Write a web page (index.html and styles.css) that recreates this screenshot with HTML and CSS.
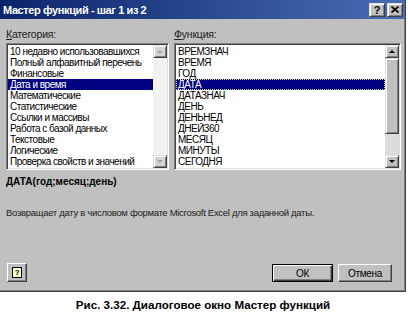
FILE: index.html
```html
<!DOCTYPE html>
<html lang="ru">
    <head>
        <meta charset="UTF-8">
        <title> Мастер функций </title>
        <link rel="stylesheet" href="styles.css">
    </head>
    <body>

        <div class="dialog">

            <!-- Заголовок окна -->
            <div class="titlebar">
                <span class="title">Мастер функций - шаг 1 из 2</span>
                <div class="title-buttons">
                    <span class="tbtn">?</span>
                    <span class="tbtn">
                        <svg width="8" height="7" viewBox="0 0 8 7">
                            <path d="M0.5 0.5 L7.5 6.5 M7.5 0.5 L0.5 6.5" stroke="#000" stroke-width="1.7" fill="none"/>
                        </svg>
                    </span>
                </div>
            </div>

            <div class="content">

                <div class="columns">

                    <!-- Категории -->
                    <div class="column">
                        <div class="label"><u>К</u>атегория:</div>
                        <div class="listbox">
                            <ul class="items">
                                <li>10 недавно использовавшихся</li>
                                <li>Полный алфавитный перечень</li>
                                <li>Финансовые</li>
                                <li class="selected">Дата и время</li>
                                <li>Математические</li>
                                <li>Статистические</li>
                                <li>Ссылки и массивы</li>
                                <li>Работа с базой данных</li>
                                <li>Текстовые</li>
                                <li>Логические</li>
                                <li>Проверка свойств и значений</li>
                            </ul>
                            <div class="scrollbar disabled">
                                <div class="sbtn"><span class="arrow-up"></span></div>
                                <div class="track"></div>
                                <div class="sbtn"><span class="arrow-down"></span></div>
                            </div>
                        </div>
                    </div>

                    <!-- Функции -->
                    <div class="column">
                        <div class="label"><u>Ф</u>ункция:</div>
                        <div class="listbox">
                            <ul class="items">
                                <li>ВРЕМЗНАЧ</li>
                                <li>ВРЕМЯ</li>
                                <li>ГОД</li>
                                <li class="selected focus">ДАТА</li>
                                <li>ДАТАЗНАЧ</li>
                                <li>ДЕНЬ</li>
                                <li>ДЕНЬНЕД</li>
                                <li>ДНЕЙ360</li>
                                <li>МЕСЯЦ</li>
                                <li>МИНУТЫ</li>
                                <li>СЕГОДНЯ</li>
                            </ul>
                            <div class="scrollbar">
                                <div class="sbtn"><span class="arrow-up"></span></div>
                                <div class="track">
                                    <div class="thumb"></div>
                                </div>
                                <div class="sbtn"><span class="arrow-down"></span></div>
                            </div>
                        </div>
                    </div>

                </div>

                <div class="signature">ДАТА(год;месяц;день)</div>
                <div class="description">Возвращает дату в числовом формате Microsoft Excel для заданной даты.</div>

                <!-- Кнопки -->
                <div class="footer">
                    <div class="btn help"><span class="help-icon">?</span></div>
                    <div class="btn default">ОК</div>
                    <div class="btn cancel">Отмена</div>
                </div>

            </div>
        </div>

        <p class="caption">Рис. 3.32. Диалоговое окно Мастер функций</p>

    </body>
</html>
```

FILE: styles.css
```css
/* Général */
html, body { margin: 0; padding: 0; background: #ffffff; }
body { font-family: 'Liberation Sans', Arial, sans-serif; color: #000000; }
ul { list-style: none; margin: 0; padding: 0; }

/* Fenêtre */
.dialog
{
    width: 406px;
    height: 292px;
    box-sizing: border-box;
    background-color: #c0c0c0;
    border-right: 1px solid #404040;
    border-bottom: 1px solid #404040;
    box-shadow: inset -1px -1px #808080;
    display: flex;
    flex-direction: column;
}

.titlebar
{
    height: 19px;
    flex: none;
    display: flex;
    align-items: center;
    justify-content: space-between;
    padding: 0 2px 0 3px;
    background: linear-gradient(to right, #0a246a, #4a6cb4);
}
.title { color: #ffffff; font-size: 11px; font-weight: 700; letter-spacing: -0.4px; }
.title-buttons { display: flex; gap: 2px; }
.tbtn
{
    width: 14px;
    height: 12px;
    display: flex;
    align-items: center;
    justify-content: center;
    background-color: #c0c0c0;
    border: 1px solid;
    border-color: #dfdfdf #404040 #404040 #dfdfdf;
    box-shadow: inset 1px 1px #ffffff, inset -1px -1px #808080;
    font-size: 11px;
    font-weight: 700;
}

.content
{
    flex: 1;
    display: flex;
    flex-direction: column;
    padding: 9px 5px 9px 6px;
}

/* Listes */
.columns
{
    display: grid;
    grid-template-columns: 163px 227px;
    column-gap: 5px;
}
.label { font-size: 10.5px; line-height: 13px; margin-bottom: 2px; color: #202020; letter-spacing: -0.2px; }

.listbox
{
    height: 127px;
    box-sizing: border-box;
    display: flex;
    background-color: #ffffff;
    border: 1px solid;
    border-color: #808080 #ffffff #ffffff #808080;
    box-shadow: inset 1px 1px #404040, inset -1px -1px #dfdfdf;
    padding: 2px 1px 1px 1px;
}
.items { flex: 1; padding-top: 0; }
.items li
{
    height: 11px;
    line-height: 11px;
    font-size: 10px;
    letter-spacing: -0.5px;
    padding-left: 2px;
    white-space: nowrap;
    overflow: hidden;
}
.items li.selected { background-color: #000080; color: #ffffff; }
.items li.focus { outline: 1px dotted #d8d880; outline-offset: -1px; }

/* Barre de défilement */
.scrollbar
{
    width: 14px;
    flex: none;
    display: flex;
    flex-direction: column;
    margin-top: -1px;
}
.sbtn
{
    height: 11px;
    flex: none;
    display: flex;
    align-items: center;
    justify-content: center;
    background-color: #c0c0c0;
    border: 1px solid;
    border-color: #dfdfdf #404040 #404040 #dfdfdf;
    box-shadow: inset 1px 1px #ffffff, inset -1px -1px #808080;
}
.track { flex: 1; background-color: #dcdcdc; }
.thumb
{
    height: 74px;
    background-color: #c0c0c0;
    border: 1px solid;
    border-color: #dfdfdf #404040 #404040 #dfdfdf;
    box-shadow: inset 1px 1px #ffffff, inset -1px -1px #808080;
}
.arrow-up, .arrow-down
{
    width: 0;
    height: 0;
    border-left: 3px solid transparent;
    border-right: 3px solid transparent;
}
.arrow-up { border-bottom: 3px solid #000000; }
.arrow-down { border-top: 3px solid #000000; }

.scrollbar.disabled .track { background-color: #f2f2f2; }
.scrollbar.disabled .sbtn { background-color: #d4d4d4; }
.scrollbar.disabled .arrow-up { border-bottom-color: #a0a0a0; }
.scrollbar.disabled .arrow-down { border-top-color: #a0a0a0; }

/* Textes */
.signature
{
    font-family: 'Liberation Sans Narrow', 'Liberation Sans', sans-serif;
    font-size: 10px;
    font-weight: 700;
    line-height: 12px;
    margin-top: 6px;
}
.description { font-size: 9.5px; line-height: 12px; margin-top: 19px; color: #202020; letter-spacing: -0.3px; }

/* Boutons */
.footer
{
    margin-top: auto;
    display: flex;
    align-items: flex-end;
    gap: 5px;
    padding-right: 8px;
}
.btn
{
    height: 18px;
    box-sizing: border-box;
    flex: none;
    display: flex;
    align-items: center;
    justify-content: center;
    font-size: 10px;
    letter-spacing: -0.3px;
    background-color: #c0c0c0;
    border: 1px solid;
    border-color: #ffffff #404040 #404040 #ffffff;
    box-shadow: inset -1px -1px #808080;
}
.btn.help { width: 20px; height: 19px; margin-right: auto; margin-left: 1px; }
.btn.default
{
    width: 61px;
    border: 1px solid #000000;
    box-shadow: inset 1px 1px #ffffff, inset -1px -1px #404040, inset -2px -2px #808080;
}
.btn.cancel { width: 54px; }
.help-icon
{
    width: 8px;
    height: 9px;
    background-color: #ffffc8;
    border: 1px solid #000000;
    font-size: 8px;
    font-weight: 700;
    line-height: 9px;
    text-align: center;
}

/* Légende */
.caption
{
    margin: 6px 0 0 0;
    width: 406px;
    text-align: center;
    font-size: 11.6px;
    font-weight: 700;
    line-height: 13px;
}
```
